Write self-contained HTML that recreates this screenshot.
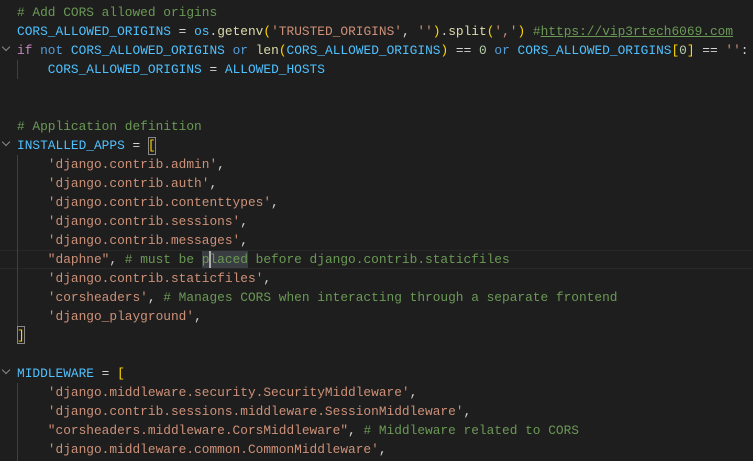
<!DOCTYPE html>
<html><head><meta charset="utf-8"><style>
body{margin:0;background:#1e1e1e;width:753px;height:461px;overflow:hidden;position:relative;font-family:"Liberation Mono",monospace;font-size:12.83px;}
.l{position:absolute;left:17px;height:19px;line-height:19px;white-space:pre;color:#d4d4d4;}
.c{color:#6a9955}.v{color:#4fc1ff}.f{color:#dcdcaa}.s{color:#ce9178}.k{color:#569cd6}.p{color:#c586c0}.n{color:#b5cea8}.y{color:#ffd700}.m{color:#da70d6}
.g{position:absolute;left:17px;width:1px;background:#404040}
.ch{position:absolute;left:3px;width:5px;height:5px;border-right:1px solid #8a8a8a;border-bottom:1px solid #8a8a8a;transform:rotate(45deg)}
</style></head><body>
<div style="position:absolute;left:0;top:250px;width:753px;height:17px;border-top:1px solid #282828;border-bottom:1px solid #282828"></div>
<div style="position:absolute;left:202px;top:251px;width:46px;height:17px;background:#3a3d41"></div>
<div style="position:absolute;left:209px;top:251px;width:2px;height:17px;background:#aeafad"></div>
<div style="position:absolute;left:148px;top:137px;width:6px;height:16px;border:1px solid #888"></div>
<div style="position:absolute;left:17px;top:326px;width:6px;height:16px;border:1px solid #888"></div>
<div class="g" style="top:60px;height:19px"></div>
<div class="g" style="top:155px;height:171px"></div>
<div class="g" style="top:383px;height:78px"></div>
<div class="ch" style="top:44px"></div>
<div class="ch" style="top:139px"></div>
<div class="ch" style="top:367px"></div>
<div class="l" style="top:3px"><span class="c"># Add CORS allowed origins</span></div>
<div class="l" style="top:22px"><span class="v">CORS_ALLOWED_ORIGINS</span> = <span class="v">os</span>.<span class="f">getenv</span><span class="y">(</span><span class="s">'TRUSTED_ORIGINS'</span>, <span class="s">''</span><span class="y">)</span>.<span class="f">split</span><span class="y">(</span><span class="s">','</span><span class="y">)</span> <span class="c">#<u>https://vip3rtech6069.com</u></span></div>
<div class="l" style="top:41px"><span class="p">if</span> <span class="k">not</span> <span class="v">CORS_ALLOWED_ORIGINS</span> <span class="k">or</span> <span class="f">len</span><span class="y">(</span><span class="v">CORS_ALLOWED_ORIGINS</span><span class="y">)</span> == <span class="n">0</span> <span class="k">or</span> <span class="v">CORS_ALLOWED_ORIGINS</span><span class="y">[</span><span class="n">0</span><span class="y">]</span> == <span class="s">''</span>:</div>
<div class="l" style="top:60px">    <span class="v">CORS_ALLOWED_ORIGINS</span> = <span class="v">ALLOWED_HOSTS</span></div>
<div class="l" style="top:117px"><span class="c"># Application definition</span></div>
<div class="l" style="top:136px"><span class="v">INSTALLED_APPS</span> = <span class="y">[</span></div>
<div class="l" style="top:155px">    <span class="s">'django.contrib.admin'</span>,</div>
<div class="l" style="top:174px">    <span class="s">'django.contrib.auth'</span>,</div>
<div class="l" style="top:193px">    <span class="s">'django.contrib.contenttypes'</span>,</div>
<div class="l" style="top:212px">    <span class="s">'django.contrib.sessions'</span>,</div>
<div class="l" style="top:231px">    <span class="s">'django.contrib.messages'</span>,</div>
<div class="l" style="top:250px">    <span class="s">"daphne"</span>, <span class="c"># must be placed before django.contrib.staticfiles</span></div>
<div class="l" style="top:269px">    <span class="s">'django.contrib.staticfiles'</span>,</div>
<div class="l" style="top:288px">    <span class="s">'corsheaders'</span>, <span class="c"># Manages CORS when interacting through a separate frontend</span></div>
<div class="l" style="top:307px">    <span class="s">'django_playground'</span>,</div>
<div class="l" style="top:326px"><span class="y">]</span></div>
<div class="l" style="top:364px"><span class="v">MIDDLEWARE</span> = <span class="y">[</span></div>
<div class="l" style="top:383px">    <span class="s">'django.middleware.security.SecurityMiddleware'</span>,</div>
<div class="l" style="top:402px">    <span class="s">'django.contrib.sessions.middleware.SessionMiddleware'</span>,</div>
<div class="l" style="top:421px">    <span class="s">"corsheaders.middleware.CorsMiddleware"</span>, <span class="c"># Middleware related to CORS</span></div>
<div class="l" style="top:440px">    <span class="s">'django.middleware.common.CommonMiddleware'</span>,</div>
</body></html>
